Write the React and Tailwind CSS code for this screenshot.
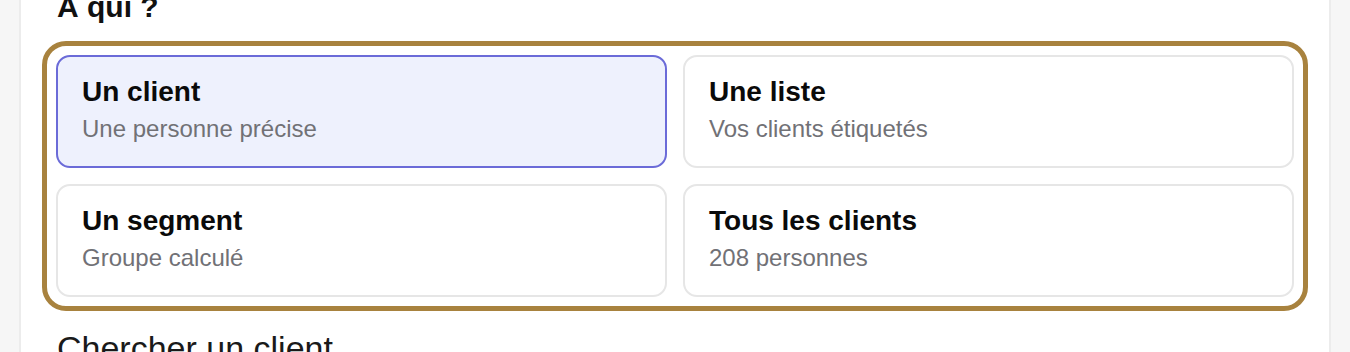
const OPTIONS = [
  { id: 'client', title: 'Un client', sub: 'Une personne précise' },
  { id: 'liste', title: 'Une liste', sub: 'Vos clients étiquetés' },
  { id: 'segment', title: 'Un segment', sub: 'Groupe calculé' },
  { id: 'tous', title: 'Tous les clients', sub: '208 personnes' },
]

export default function App() {
  const selected = 'client'

  return (
    <div className="h-[352px] overflow-hidden bg-[#f6f6f6] px-[19px] font-['Liberation_Sans',Arial,sans-serif]">
      <div className="flow-root h-full border-x-2 border-[#ececec] bg-white px-[21px]">
        <h2 className="mt-[-11px] pl-[15px] text-[30px] font-bold leading-[36px] text-[#111]">À qui ?</h2>

        {/* Choix du destinataire */}
        <div className="mt-4 rounded-[24px] border-[5px] border-[#a8823e] p-[9px]">
          <div className="grid grid-cols-2 gap-4">
            {OPTIONS.map((o) => (
              <button
                key={o.id}
                className={`flex h-[113px] flex-col justify-start rounded-[14px] border-2 px-6 pt-[18px] text-left ${
                  selected === o.id ? 'border-[#6b6bd8] bg-[#eef1fd]' : 'border-[#e6e6e6] bg-white'
                }`}
              >
                <span className="text-[28px] font-bold leading-[34px] text-[#0a0a0a]">{o.title}</span>
                <span className="mt-[5px] text-[24px] leading-[30px] text-[#717176]">{o.sub}</span>
              </button>
            ))}
          </div>
        </div>

        <p className="mt-[17px] pl-[15px] text-[34px] leading-[40px] text-[#1a1a1a]">Chercher un client</p>
      </div>
    </div>
  )
}
